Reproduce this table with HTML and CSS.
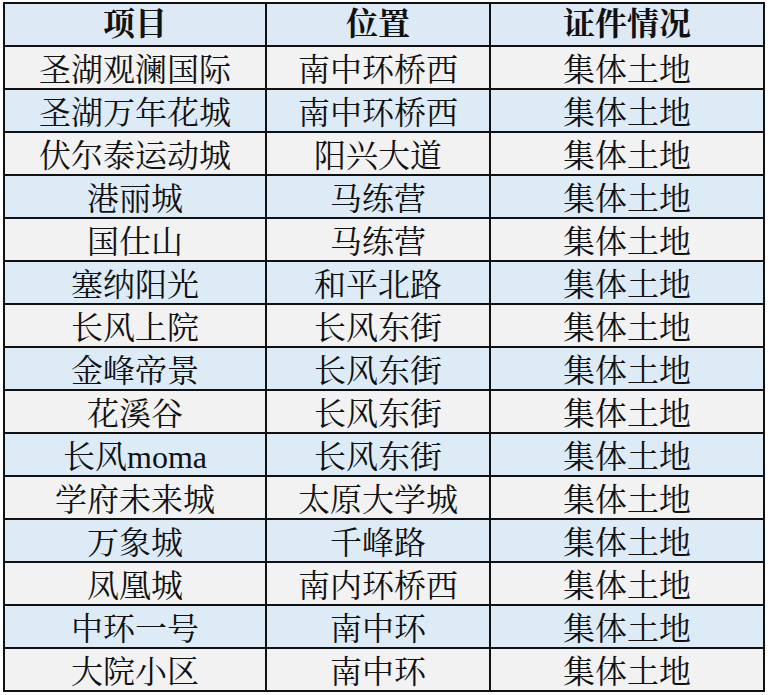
FILE: index.html
```html
<!DOCTYPE html>
<html lang="zh-CN">
<head>
<meta charset="utf-8">
<title>项目列表</title>
<link rel="stylesheet" href="styles.css">
</head>
<body>
<table class="sheet">
  <colgroup>
    <col class="c1"><col class="c2"><col class="c3">
  </colgroup>
  <thead>
    <tr class="head"><th>项目</th><th>位置</th><th>证件情况</th></tr>
  </thead>
  <tbody>
    <tr class="odd"><td>圣湖观澜国际</td><td>南中环桥西</td><td>集体土地</td></tr>
    <tr class="even"><td>圣湖万年花城</td><td>南中环桥西</td><td>集体土地</td></tr>
    <tr class="odd"><td>伏尔泰运动城</td><td>阳兴大道</td><td>集体土地</td></tr>
    <tr class="even"><td>港丽城</td><td>马练营</td><td>集体土地</td></tr>
    <tr class="odd"><td>国仕山</td><td>马练营</td><td>集体土地</td></tr>
    <tr class="even"><td>塞纳阳光</td><td>和平北路</td><td>集体土地</td></tr>
    <tr class="odd"><td>长风上院</td><td>长风东街</td><td>集体土地</td></tr>
    <tr class="even"><td>金峰帝景</td><td>长风东街</td><td>集体土地</td></tr>
    <tr class="odd"><td>花溪谷</td><td>长风东街</td><td>集体土地</td></tr>
    <tr class="even"><td>长风moma</td><td>长风东街</td><td>集体土地</td></tr>
    <tr class="odd"><td>学府未来城</td><td>太原大学城</td><td>集体土地</td></tr>
    <tr class="even"><td>万象城</td><td>千峰路</td><td>集体土地</td></tr>
    <tr class="odd"><td>凤凰城</td><td>南内环桥西</td><td>集体土地</td></tr>
    <tr class="even"><td>中环一号</td><td>南中环</td><td>集体土地</td></tr>
    <tr class="odd"><td>大院小区</td><td>南中环</td><td>集体土地</td></tr>
  </tbody>
</table>
</body>
</html>
```

FILE: styles.css
```css
html, body {
  margin: 0;
  padding: 0;
  background: #ffffff;
}

body {
  padding: 2px 0 0 3px;
  font-family: "Liberation Serif", "Noto Serif CJK SC", "Noto Sans CJK SC", serif;
  color: #111111;
}

.sheet {
  border-collapse: collapse;
  table-layout: fixed;
  width: 760px;
  height: 690px;
}

.c1 { width: 262px; }
.c2 { width: 224px; }
.c3 { width: 274px; }

.sheet th,
.sheet td {
  border: 2px solid #111111;
  padding: 0;
  text-align: center;
  vertical-align: middle;
  font-size: 32px;
  line-height: 1;
  white-space: nowrap;
}

.sheet th {
  font-weight: 700;
  padding-bottom: 2px;
}

.sheet td {
  font-weight: 400;
  padding-top: 5px;
}

.head {
  height: 43px;
  background: #dde9f5;
}

.odd {
  height: 43px;
  background: #f2f2f2;
}

.even {
  height: 43px;
  background: #ddebf7;
}
```
